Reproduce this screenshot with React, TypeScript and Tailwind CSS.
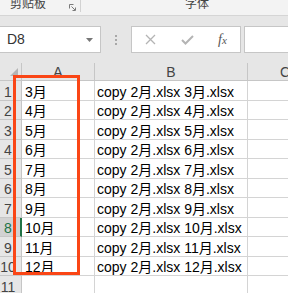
import React from 'react';

const rows = [
  { n: 1, a: '3月', b: 'copy 2月.xlsx 3月.xlsx', h: 'h-[20px]' },
  { n: 2, a: '4月', b: 'copy 2月.xlsx 4月.xlsx', h: 'h-[19px]' },
  { n: 3, a: '5月', b: 'copy 2月.xlsx 5月.xlsx', h: 'h-[20px]' },
  { n: 4, a: '6月', b: 'copy 2月.xlsx 6月.xlsx', h: 'h-[19px]' },
  { n: 5, a: '7月', b: 'copy 2月.xlsx 7月.xlsx', h: 'h-[20px]' },
  { n: 6, a: '8月', b: 'copy 2月.xlsx 8月.xlsx', h: 'h-[19px]' },
  { n: 7, a: '9月', b: 'copy 2月.xlsx 9月.xlsx', h: 'h-[20px]' },
  { n: 8, a: '10月', b: 'copy 2月.xlsx 10月.xlsx', h: 'h-[19px]' },
  { n: 9, a: '11月', b: 'copy 2月.xlsx 11月.xlsx', h: 'h-[20px]' },
  { n: 10, a: '12月', b: 'copy 2月.xlsx 12月.xlsx', h: 'h-[19px]' },
  { n: 11, a: '', b: '', h: 'h-[20px]' },
];

function Launcher() {
  return (
    <svg width="7" height="7" viewBox="0 0 7 7" fill="none" stroke="#7a7a7a" strokeWidth="1">
      <path d="M0.5 4.5V0.5H4.5" />
      <path d="M2.5 2.5L6 6" />
      <path d="M6.5 3.5V6.5H3.5" />
    </svg>
  );
}

export default function App() {
  return (
    <div className="relative w-[288px] h-[293px] overflow-hidden bg-[#e6e6e6] font-['Liberation_Sans','Noto_Sans_CJK_SC',sans-serif]">
      {/* ribbon */}
      <div className="h-[16px] bg-[#f3f3f3] border-b border-[#d5d5d5] flex items-start overflow-hidden text-[12px] leading-[12px] text-[#444]">
        <span className="shrink-0 ml-[10px] mt-[-2px]">剪贴板</span>
        <span className="shrink-0 ml-[23px] mt-[4px]">
          <Launcher />
        </span>
        <span className="shrink-0 ml-[4px] w-px h-[12px] bg-[#d2d2d2]" />
        <span className="shrink-0 ml-[104px] mt-[-2px]">字体</span>
      </div>

      <div className="h-[10px]" />

      {/* formula bar */}
      <div className="flex h-[27px]">
        <div className="shrink-0 -ml-px w-[102px] bg-white border border-[#c6c6c6] flex items-center pl-[7px] pr-[7px] text-[14px] text-[#333]">
          <span className="flex-1">D8</span>
          <svg width="7" height="4" viewBox="0 0 7 4">
            <path d="M0 0H7L3.5 4Z" fill="#777" />
          </svg>
        </div>
        <div className="shrink-0 w-[30px] flex items-center justify-center">
          <svg width="2" height="10" viewBox="0 0 2 10">
            <rect x="0" y="0" width="2" height="2" fill="#a8a8a8" />
            <rect x="0" y="4" width="2" height="2" fill="#a8a8a8" />
            <rect x="0" y="8" width="2" height="2" fill="#a8a8a8" />
          </svg>
        </div>
        <div className="shrink-0 w-[110px] bg-white border border-[#c6c6c6] flex items-center">
          <div className="w-[37px] flex justify-center">
            <svg width="11" height="11" viewBox="0 0 11 11" stroke="#b4b4b4" strokeWidth="1.3">
              <path d="M1 1L10 10M10 1L1 10" />
            </svg>
          </div>
          <div className="w-[36px] flex justify-center">
            <svg width="13" height="10" viewBox="0 0 13 10" fill="none" stroke="#b4b4b4" strokeWidth="2">
              <path d="M1 5L4.5 8.5L12 1" />
            </svg>
          </div>
          <div className="flex-1 flex justify-center font-['Liberation_Serif',serif] italic text-[14px] text-[#555]">
            <span>f</span>
            <span className="text-[11px] mt-[3px]">x</span>
          </div>
        </div>
        <div className="ml-[3px] flex-1 -mr-px bg-white border border-[#c6c6c6]" />
      </div>

      <div className="h-[10px]" />

      {/* column header */}
      <div className="flex h-[18px] border-b border-[#c6c6c6] text-[14px] leading-[16px] text-[#444]">
        <div className="shrink-0 w-[22px] border-r border-[#c6c6c6] flex items-end justify-end pr-[3px] pb-[4px]">
          <svg width="8" height="8" viewBox="0 0 8 8">
            <path d="M8 0V8H0Z" fill="#b4b4b4" />
          </svg>
        </div>
        <div className="shrink-0 w-[73px] border-r border-[#c6c6c6] flex items-end justify-center">A</div>
        <div className="shrink-0 w-[153px] border-r border-[#c6c6c6] flex items-end justify-center">B</div>
        <div className="shrink-0 w-[73px] flex items-end pl-[32px]">C</div>
      </div>

      {/* rows */}
      {rows.map((r) => (
        <div key={r.n} className={`flex ${r.h} text-[14px] leading-[16px]`}>
          <div
            className={
              r.n === 8
                ? 'shrink-0 w-[22px] bg-[#d2d2d2] border-b border-[#c6c6c6] border-r-2 border-r-[#217346] flex items-end justify-center pr-[4px] text-[#217346]'
                : 'shrink-0 w-[22px] border-b border-r border-[#c6c6c6] flex items-end justify-center pr-[5px] text-[#444]'
            }
          >
            {r.n}
          </div>
          <div className="shrink-0 w-[73px] bg-white border-b border-r border-[#d4d4d4] flex items-end pl-[3px] text-black whitespace-nowrap">
            {r.a}
          </div>
          <div className="shrink-0 w-[153px] bg-white border-b border-r border-[#d4d4d4] flex items-end pl-[2px] text-black whitespace-nowrap overflow-hidden">
            {r.b}
          </div>
          <div className="shrink-0 w-[73px] bg-white border-b border-r border-[#d4d4d4]" />
        </div>
      ))}

      {/* annotation box */}
      <div className="absolute left-[13px] top-[75px] w-[67px] h-[200px] border-[3px] border-[#fa4616]" />
    </div>
  );
}
